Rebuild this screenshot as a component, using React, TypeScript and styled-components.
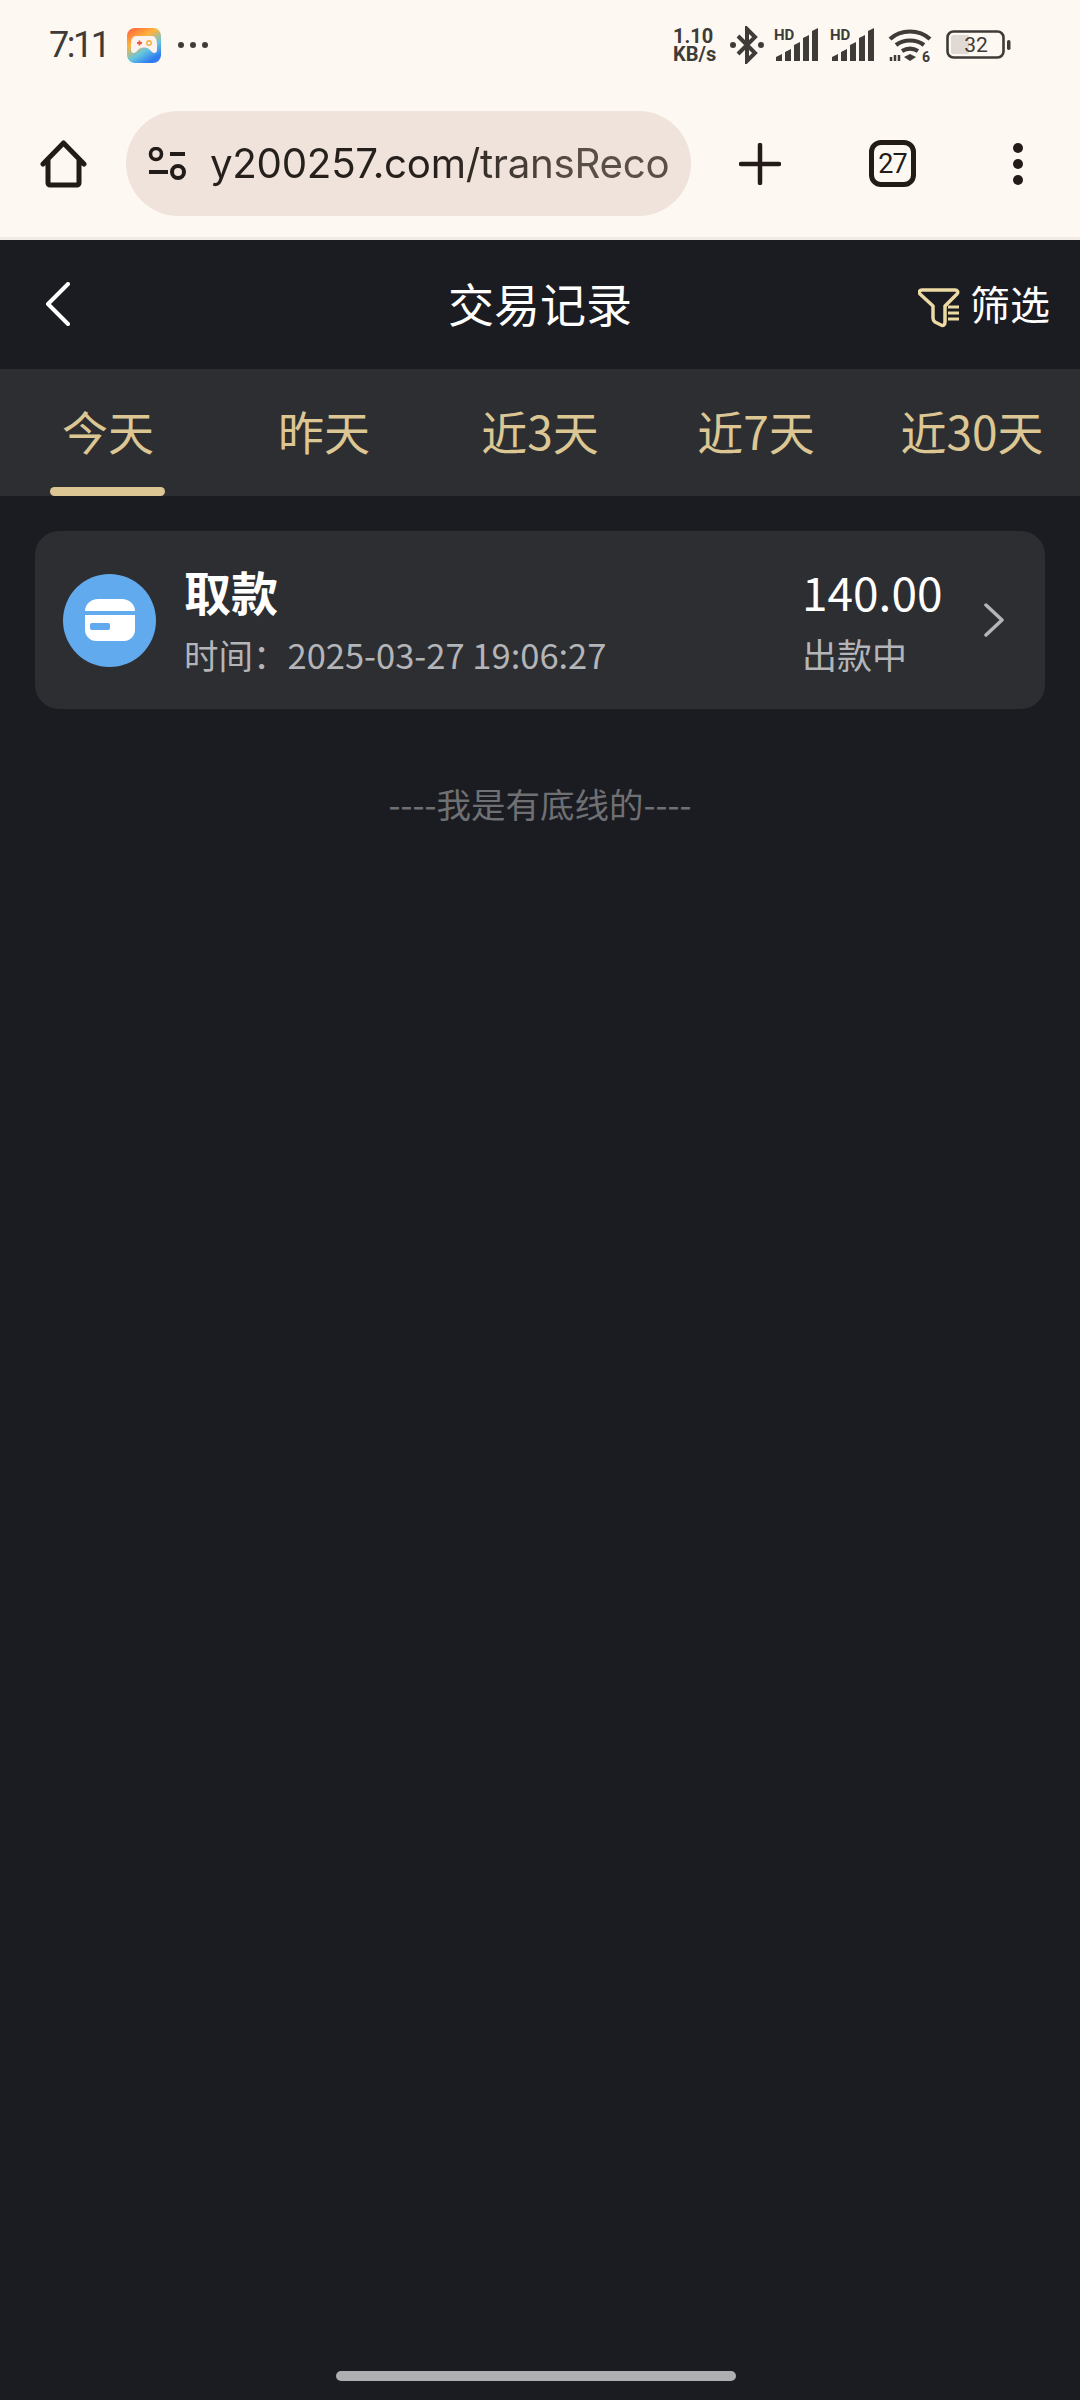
import * as React from 'react';
import styled, { createGlobalStyle } from 'styled-components';

const GlobalStyle = createGlobalStyle`
  html, body {
    margin: 0;
    padding: 0;
    background: #1b1c21;
  }
  * {
    box-sizing: border-box;
  }
`;

const cjk = `"Noto Sans CJK SC", "Noto Sans", sans-serif`;

const Page = styled('div')`
  width: 1080px;
  height: 2400px;
  display: flex;
  flex-direction: column;
  background: #1b1c21;
  overflow: hidden;
  font-family: ${cjk};
`;

const Chrome = styled('div')`
  height: 240px;
  background: #fdf8f2;
  border-bottom: 3px solid #f3ece5;
  display: flex;
  flex-direction: column;
`;

const StatusBar = styled('div')`
  height: 90px;
  padding: 0 68px 0 49px;
  display: flex;
  align-items: center;
  justify-content: space-between;
`;

const StatusLeft = styled('div')`
  display: flex;
  align-items: center;
`;

const Clock = styled('span')`
  font-family: Roboto, sans-serif;
  font-size: 36px;
  letter-spacing: -2.500px;
  color: #3f3b38;
  width: 78px;
`;

const StatusDots = styled('div')`
  display: flex;
  gap: 6px;
  margin-left: 17px;
`;

const Dot = styled('span')`
  width: 6px;
  height: 6px;
  border-radius: 50%;
  background: #3f3b38;
`;

const StatusRight = styled('div')`
  display: flex;
  align-items: center;
`;

const NetSpeed = styled('div')`
  width: 50px;
  margin-right: 7px;
  font-family: Roboto, sans-serif;
  font-weight: 700;
  font-size: 20px;
  line-height: 18px;
  color: #3f3b38;
  white-space: nowrap;
`;

const NetUnit = styled('div')`
  font-size: 20px;
`;

const BrowserBar = styled('div')`
  flex: 1;
  padding: 21px 0 0 40px;
  display: flex;
  align-items: flex-start;
`;

const AddressPill = styled('div')`
  width: 565px;
  height: 105px;
  margin-left: 39px;
  padding-left: 22px;
  border-radius: 53px;
  background: #efe3db;
  display: flex;
  align-items: center;
  overflow: hidden;

  svg {
    flex-shrink: 0;
  }
`;

const UrlText = styled('div')`
  margin-left: 23px;
  white-space: nowrap;
  font-family: Inter, Roboto, sans-serif;
  font-size: 40.300px;
  letter-spacing: -0.300px;
  background: linear-gradient(90deg, #26201c 50%, #5a4f47 80%);
  -webkit-background-clip: text;
  background-clip: text;
  color: transparent;
`;

const ToolbarIcon = styled('div')<{ $left: number }>`
  margin-left: ${({ $left }) => $left}px;
  height: 105px;
  display: flex;
  align-items: center;
`;

const TabCounter = styled('div')`
  width: 47px;
  height: 47px;
  border: 5px solid #221b17;
  border-radius: 12px;
  display: flex;
  align-items: center;
  justify-content: center;
  font-family: Roboto, sans-serif;
  font-size: 27px;
  letter-spacing: -1px;
  color: #221b17;
`;

const Header = styled('header')`
  height: 129px;
  padding: 0 30px;
  display: grid;
  grid-template-columns: 1fr auto 1fr;
  align-items: center;
`;

const BackButton = styled('div')`
  display: flex;
  margin: -2px 0 0 15px;
`;

const Title = styled('h1')`
  margin: -6px 0 0;
  font-size: 46px;
  font-weight: 400;
  line-height: 60px;
  color: #fff;
`;

const FilterAction = styled('div')`
  justify-self: end;
  margin-top: -4px;
  display: flex;
  align-items: center;
  gap: 10px;
  font-size: 40px;
  line-height: 50px;
  color: #fff;

  svg {
    margin-top: 10px;
  }
`;

const Tabs = styled('nav')`
  height: 127px;
  background: #2d2e32;
  display: grid;
  grid-template-columns: repeat(5, 1fr);
`;

const Tab = styled('div')<{ $active?: boolean }>`
  position: relative;
  padding-top: 31px;
  text-align: center;
  font-size: 46px;
  line-height: 60px;
  color: #dcc794;

  ${({ $active }) => $active && `
    &::after {
      content: '';
      position: absolute;
      left: 50px;
      bottom: 0;
      width: 115px;
      height: 9px;
      border-radius: 5px;
      background: #dcc794;
    }
  `}
`;

const Content = styled('main')`
  flex: 1;
  padding: 35px 35px 0;
`;

const RecordCard = styled('div')`
  height: 178px;
  padding: 0 41px 0 28px;
  border-radius: 24px;
  background: #2d2e32;
  display: flex;
  align-items: center;
`;

const RecordIcon = styled('div')`
  width: 93px;
  height: 93px;
  border-radius: 50%;
  background: #62aaee;
  display: flex;
  align-items: center;
  justify-content: center;
`;

const RecordInfo = styled('div')`
  flex: 1;
  margin-left: 28px;
`;

const RecordTitle = styled('div')`
  font-size: 47px;
  font-weight: 700;
  line-height: 60px;
  color: #fff;
`;

const RecordTime = styled('div')`
  margin-top: 8px;
  font-size: 34.500px;
  line-height: 50px;
  color: #b4b5b8;
`;

const RecordAmount = styled('div')`
  width: 182px;
`;

const AmountValue = styled('div')`
  font-size: 46px;
  line-height: 60px;
  color: #fff;
`;

const AmountStatus = styled('div')`
  margin-top: 8px;
  font-size: 35px;
  line-height: 50px;
  color: #b4b5b8;
`;

const EndNote = styled('div')`
  margin-top: 69px;
  text-align: center;
  font-size: 34.500px;
  line-height: 50px;
  color: #6f7074;
`;

const HomeIndicator = styled('div')`
  width: 400px;
  height: 10px;
  margin: 0 auto 19px 336px;
  border-radius: 5px;
  background: #aeafb1;
`;

const SignalBars = ({ marginRight }: { marginRight: number }) => (
  <svg width="46" height="46" viewBox="0 -6 46 46" style={{ marginRight }}>
    <text x="0" y="12" fontFamily="Roboto, sans-serif" fontWeight="700" fontSize="15" fill="#3f3b38">HD</text>
    <path d="M2 33v-4l6-3v7zM11 33v-9l6-3v12zM20 33V17l6-3v19zM29 33V10l6-3v26zM38 33V3l6-3v33z" fill="#3f3b38" />
  </svg>
);

const App = () => {
  return (
    <Page>
      <GlobalStyle />
      <Chrome>
        <StatusBar>
          <StatusLeft>
            <Clock>7:11</Clock>
            <svg width="34" height="35" viewBox="0 0 34 35">
              <defs>
                <linearGradient id="gameTile" x1="0" y1="0" x2="0.6" y2="1">
                  <stop offset="0" stopColor="#ff5a3c" />
                  <stop offset="0.4" stopColor="#ffb43c" />
                  <stop offset="0.72" stopColor="#63c5e0" />
                  <stop offset="1" stopColor="#2f7cf0" />
                </linearGradient>
              </defs>
              <rect width="34" height="35" rx="8" fill="url(#gameTile)" />
              <path d="M9 8h16c3 0 5 3 5 8v6c0 3-3 4-5 2l-3-3c-3-2-7-2-10 0l-3 3c-2 2-5 1-5-2v-6c0-5 2-8 5-8z" fill="#fdf3ee" />
              <path d="M10 15h5M12.500 12.500v5" stroke="#f0593c" strokeWidth="1.800" />
              <circle cx="22" cy="15" r="2.200" fill="none" stroke="#f4ae3a" strokeWidth="1.400" />
            </svg>
            <StatusDots>
              <Dot />
              <Dot />
              <Dot />
            </StatusDots>
          </StatusLeft>
          <StatusRight>
            <NetSpeed>
              1.10
              <NetUnit>KB/s</NetUnit>
            </NetSpeed>
            <svg width="34" height="38" viewBox="0 0 34 38" style={{ marginRight: 10 }}>
              <path d="M8 10l17 17-8 8V3l8 8-17 17" fill="none" stroke="#3f3b38" strokeWidth="4" />
              <circle cx="3" cy="19" r="3" fill="#3f3b38" />
              <circle cx="31" cy="19" r="3" fill="#3f3b38" />
            </svg>
            <SignalBars marginRight={10} />
            <SignalBars marginRight={12} />
            <svg width="44" height="46" viewBox="0 -6 44 46" style={{ marginRight: 14 }}>
              <path d="M2 11c11-10 29-10 40 0M8 17c8-6 20-6 28 0M14 23c5-3 11-3 16 0" fill="none" stroke="#3f3b38" strokeWidth="4.200" />
              <path d="M16 29l6-3 6 3-6 4z" fill="#3f3b38" />
              <text x="34" y="34" fontFamily="Roboto, sans-serif" fontWeight="700" fontSize="14" fill="#3f3b38">6</text>
              <path d="M3 29v4M7 27v6M11 27v6" stroke="#3f3b38" strokeWidth="2.500" />
            </svg>
            <svg width="66" height="30" viewBox="0 0 66 30">
              <rect x="1.500" y="1.500" width="56" height="26" rx="6" fill="none" stroke="#3f3b38" strokeWidth="2.600" />
              <rect x="5" y="5" width="18" height="19" rx="2" fill="#e0d9d4" />
              <text x="30" y="22" textAnchor="middle" fontFamily="Roboto, sans-serif" fontSize="21" fill="#3f3b38">32</text>
              <rect x="61" y="10" width="3.500" height="10" rx="1.700" fill="#3f3b38" />
            </svg>
          </StatusRight>
        </StatusBar>
        <BrowserBar>
          <ToolbarIcon $left={0}>
            <svg width="47" height="48" viewBox="0 0 47 48">
              <path d="M3 24L23.500 3 44 24M8 20v23a2 2 0 0 0 2 2h27a2 2 0 0 0 2-2V20" fill="none" stroke="#221b17" strokeWidth="5" strokeLinecap="round" strokeLinejoin="round" />
            </svg>
          </ToolbarIcon>
          <AddressPill>
            <svg width="39" height="34" viewBox="0 0 39 34">
              <circle cx="8" cy="7" r="5.500" fill="none" stroke="#221b17" strokeWidth="3.600" />
              <path d="M22 7h15M1 25h19" stroke="#221b17" strokeWidth="4" />
              <circle cx="30" cy="25" r="6" fill="none" stroke="#221b17" strokeWidth="4" />
            </svg>
            <UrlText>y200257.com/transReco</UrlText>
          </AddressPill>
          <ToolbarIcon $left={48}>
            <svg width="42" height="42" viewBox="0 0 42 42">
              <path d="M21 2v38M2 21h38" stroke="#221b17" strokeWidth="4.500" strokeLinecap="round" />
            </svg>
          </ToolbarIcon>
          <ToolbarIcon $left={88}>
            <TabCounter>27</TabCounter>
          </ToolbarIcon>
          <ToolbarIcon $left={97}>
            <svg width="10" height="42" viewBox="0 0 10 42">
              <circle cx="5" cy="5" r="5" fill="#221b17" />
              <circle cx="5" cy="21" r="5" fill="#221b17" />
              <circle cx="5" cy="37" r="5" fill="#221b17" />
            </svg>
          </ToolbarIcon>
        </BrowserBar>
      </Chrome>
      <Header>
        <BackButton>
          <svg width="26" height="44" viewBox="0 0 26 44">
            <path d="M23 2L3 22l20 20" fill="none" stroke="#fff" strokeWidth="4" strokeLinecap="round" strokeLinejoin="round" />
          </svg>
        </BackButton>
        <Title>交易记录</Title>
        <FilterAction>
          <svg width="42" height="40" viewBox="0 0 42 40">
            <path d="M4 2h33c2.500 0 3.500 2 2 4L27 18v16c0 3-2 4-4 3l-6-3c-1.500-1-2-2-2-4V18L2 6C.5 4 1.500 2 4 2z" fill="none" stroke="#ecd9a3" strokeWidth="3.500" strokeLinejoin="round" />
            <path d="M30 19h11M30 25h11M30 31h11" stroke="#ecd9a3" strokeWidth="3" />
          </svg>
          筛选
        </FilterAction>
      </Header>
      <Tabs>
        <Tab $active>今天</Tab>
        <Tab>昨天</Tab>
        <Tab>近3天</Tab>
        <Tab>近7天</Tab>
        <Tab>近30天</Tab>
      </Tabs>
      <Content>
        <RecordCard>
          <RecordIcon>
            <svg width="50" height="42" viewBox="0 0 50 42">
              <path d="M13 0h24c7 0 13 5 13 12H0C0 5 6 0 13 0z" fill="#fff" />
              <path d="M0 16h50v15c0 6-5 11-11 11H11C5 42 0 37 0 31z" fill="#fff" />
              <rect x="5" y="24" width="20" height="7" rx="2" fill="#62aaee" />
            </svg>
          </RecordIcon>
          <RecordInfo>
            <RecordTitle>取款</RecordTitle>
            <RecordTime>时间：2025-03-27 19:06:27</RecordTime>
          </RecordInfo>
          <RecordAmount>
            <AmountValue>140.00</AmountValue>
            <AmountStatus>出款中</AmountStatus>
          </RecordAmount>
          <svg width="20" height="34" viewBox="0 0 20 34">
            <path d="M2 2l16 15L2 32" fill="none" stroke="#b4b5b8" strokeWidth="3.500" strokeLinecap="round" strokeLinejoin="round" />
          </svg>
        </RecordCard>
        <EndNote>----我是有底线的----</EndNote>
      </Content>
      <HomeIndicator />
    </Page>
  );
};

export default App;
